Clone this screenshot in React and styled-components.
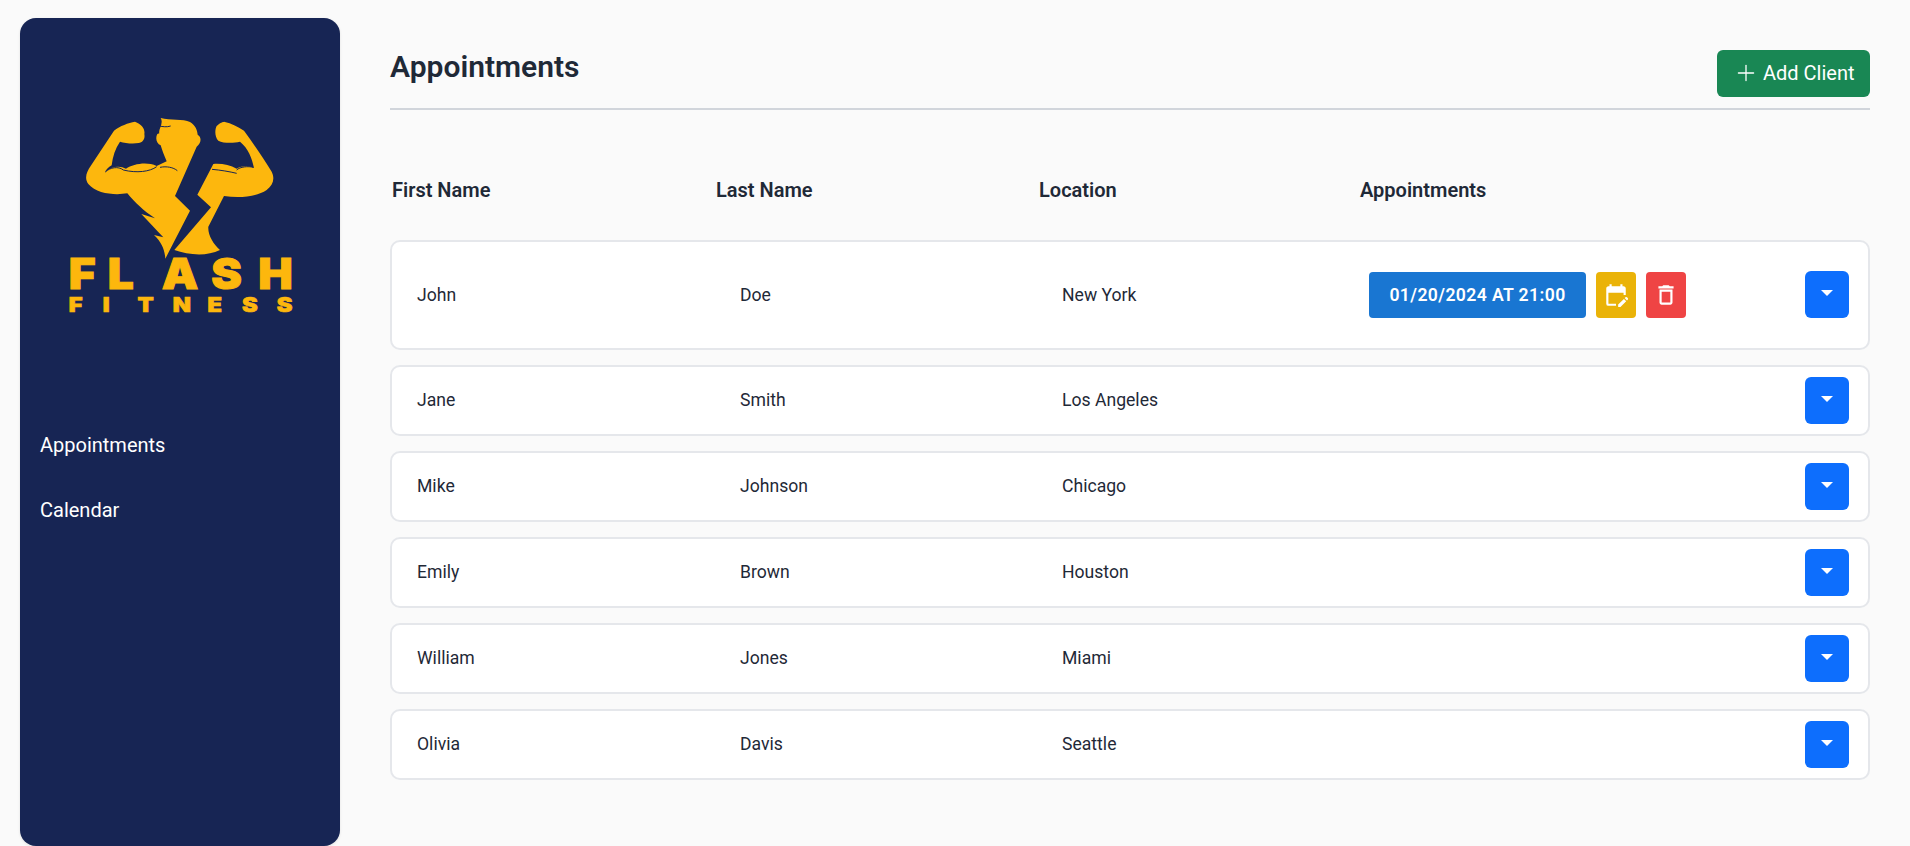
import styled, { createGlobalStyle } from "styled-components";
import { MdEditCalendar, MdOutlineDelete } from "react-icons/md";
import { Plus } from "lucide-react";

const GlobalStyle = createGlobalStyle`
  html, body {
    margin: 0;
    padding: 0;
    height: 846px;
    overflow: hidden;
    background: #fafafa;
    font-family: Roboto, "Liberation Sans", sans-serif;
    color: #1f2937;
  }
  * { box-sizing: border-box; }
`;

const Layout = styled.div`
  display: flex;
  height: 846px;
  padding: 18px 40px 0 20px;
  gap: 50px;
`;

const Sidebar = styled.aside`
  width: 320px;
  flex-shrink: 0;
  background: #172554;
  border-radius: 16px;
  box-shadow: 0 1px 3px rgba(0, 0, 0, 0.1);
  padding: 92px 20px 0;
`;

const LogoWrap = styled.div`
  height: 230px;
  display: flex;
  justify-content: center;
  margin-bottom: 94px;
`;

const NavList = styled.nav`
  display: flex;
  flex-direction: column;
  gap: 42px;
`;

const NavItem = styled.a`
  color: #fff;
  font-size: 20px;
  line-height: 23px;
`;

const Main = styled.main`
  flex: 1;
  min-width: 0;
`;

const Header = styled.header`
  display: flex;
  justify-content: space-between;
  align-items: flex-start;
  height: 92px;
  border-bottom: 2px solid #d1d5db;
  padding-top: 32px;
`;

const Title = styled.h1`
  margin: -1px 0 0;
  font-size: 30px;
  line-height: 36px;
  font-weight: 600;
  color: #1f2937;
`;

const AddButton = styled.button`
  display: flex;
  align-items: center;
  gap: 4px;
  height: 47px;
  width: 153px;
  padding: 0 0 1px 16px;
  border: none;
  border-radius: 6px;
  background: #198754;
  color: #fff;
  font: 400 20px Roboto, sans-serif;
`;

const Columns = styled.div`
  display: grid;
  grid-template-columns: 324px 323px 321px 1fr;
  padding: 69px 0 0 2px;
  height: 130px;
  font-size: 20px;
  line-height: 23px;
  font-weight: 600;
  color: #1f2937;
`;

const Rows = styled.div`
  display: flex;
  flex-direction: column;
  gap: 15px;
`;

const Row = styled.div`
  display: grid;
  grid-template-columns: 323px 322px 307px 1fr auto;
  align-items: center;
  height: ${(p) => (p.$tall ? "110px" : "71px")};
  padding: 0 19px 1px 25px;
  background: #fff;
  border: 2px solid #e5e7eb;
  border-radius: 10px;
  font-size: 17.6px;
  color: #1f2937;
`;

const Actions = styled.div`
  display: flex;
  gap: 10px;
`;

const DatePill = styled.button`
  width: 217px;
  height: 46px;
  border: none;
  border-radius: 4px;
  background: #1976d2;
  color: #fff;
  font: 600 17.6px Roboto, sans-serif;
  letter-spacing: 0.4px;
`;

const IconButton = styled.button`
  width: 40px;
  height: 46px;
  display: flex;
  align-items: center;
  justify-content: center;
  padding: 0;
  border: none;
  border-radius: 4px;
  color: #fff;
  background: ${(p) => p.$bg};
`;

const Toggle = styled.button`
  grid-column: 5;
  width: 44px;
  height: 47px;
  display: flex;
  align-items: center;
  justify-content: center;
  border: none;
  border-radius: 6px;
  background: #0d6efd;

  &::after {
    content: "";
    border-top: 6px solid #fff;
    border-left: 6px solid transparent;
    border-right: 6px solid transparent;
    margin-top: -3px;
  }
`;

const clients = [
  ["John", "Doe", "New York", "01/20/2024 AT 21:00"],
  ["Jane", "Smith", "Los Angeles"],
  ["Mike", "Johnson", "Chicago"],
  ["Emily", "Brown", "Houston"],
  ["William", "Jones", "Miami"],
  ["Olivia", "Davis", "Seattle"],
];

function Logo() {
  const gold = "#fdb70d";
  const navy = "#172554";
  return (
    <svg width="280" height="250" viewBox="0 0 840 750" style={{ marginTop: -20 }}>
      <path
        fill={gold}
        d="M362 84 C390 92 430 86 450 96 C466 106 472 120 473 134 C484 140 486 158 470 170 L405 318 L450 362 L376 506 C374 480 366 458 342 435 L370 442 C350 420 325 395 304 372 L345 385 C310 362 285 338 262 310 C225 316 170 312 145 282 C132 265 140 245 152 228 L222 122 C240 108 265 98 285 95 C305 102 316 118 313 132 C316 146 308 158 296 159 C280 162 255 160 240 155 C226 175 218 200 215 226 C205 232 198 240 195 246 C215 228 240 226 258 236 C280 222 320 214 350 228 L380 214 C372 195 366 180 362 166 C350 160 345 145 352 132 L358 130 C354 118 372 100 362 84 Z"
      />
      <path
        fill={gold}
        d="M520 222 C545 220 570 225 590 236 C605 228 625 226 642 234 C636 205 625 175 600 155 C580 160 550 160 535 152 C524 140 524 120 530 108 C540 98 548 96 552 95 C575 100 595 110 612 122 C640 160 670 205 695 245 C705 265 700 285 680 300 C650 320 600 325 552 318 L505 410 C503 435 520 462 540 480 C500 500 445 495 403 480 L513 352 L472 314 Z"
      />
      <g fill="none" stroke={navy} strokeWidth="3">
        <path d="M250 240 C290 250 330 245 350 230" />
        <path d="M360 232 C380 228 400 232 412 242" />
        <path d="M516 238 C540 240 570 245 590 250" />
        <path d="M640 232 C625 228 600 230 590 240" />
        <path d="M196 246 C210 232 235 228 250 240" />
        <path d="M358 108 C368 110 380 112 392 108" />
      </g>
      <g fill={gold} stroke={gold} fontFamily="Inter, sans-serif" fontWeight="900">
        <text
          transform="translate(0 596) scale(1.08 1)"
          x="80 188 338 476 606"
          fontSize="128"
          strokeWidth="3"
        >
          FLASH
        </text>
        <text
          transform="translate(0 665) scale(1.2 1)"
          x="72 157 244 332 419 505 592"
          fontSize="59"
          strokeWidth="2"
        >
          FITNESS
        </text>
      </g>
    </svg>
  );
}

export default function App() {
  return (
    <>
      <GlobalStyle />
      <Layout>
        <Sidebar>
          <LogoWrap>
            <Logo />
          </LogoWrap>
          <NavList>
            <NavItem>Appointments</NavItem>
            <NavItem>Calendar</NavItem>
          </NavList>
        </Sidebar>
        <Main>
          <Header>
            <Title>Appointments</Title>
            <AddButton>
              <Plus size={26} strokeWidth={1.2} />
              Add Client
            </AddButton>
          </Header>
          <Columns>
            <span>First Name</span>
            <span>Last Name</span>
            <span>Location</span>
            <span>Appointments</span>
          </Columns>
          <Rows>
            {clients.map(([first, last, city, date]) => (
              <Row key={first} $tall={!!date}>
                <span>{first}</span>
                <span>{last}</span>
                <span>{city}</span>
                {date ? (
                  <Actions>
                    <DatePill>{date}</DatePill>
                    <IconButton $bg="#eab308">
                      <MdEditCalendar size={26} />
                    </IconButton>
                    <IconButton $bg="#ef4444">
                      <MdOutlineDelete size={26} />
                    </IconButton>
                  </Actions>
                ) : (
                  <span />
                )}
                <Toggle />
              </Row>
            ))}
          </Rows>
        </Main>
      </Layout>
    </>
  );
}
